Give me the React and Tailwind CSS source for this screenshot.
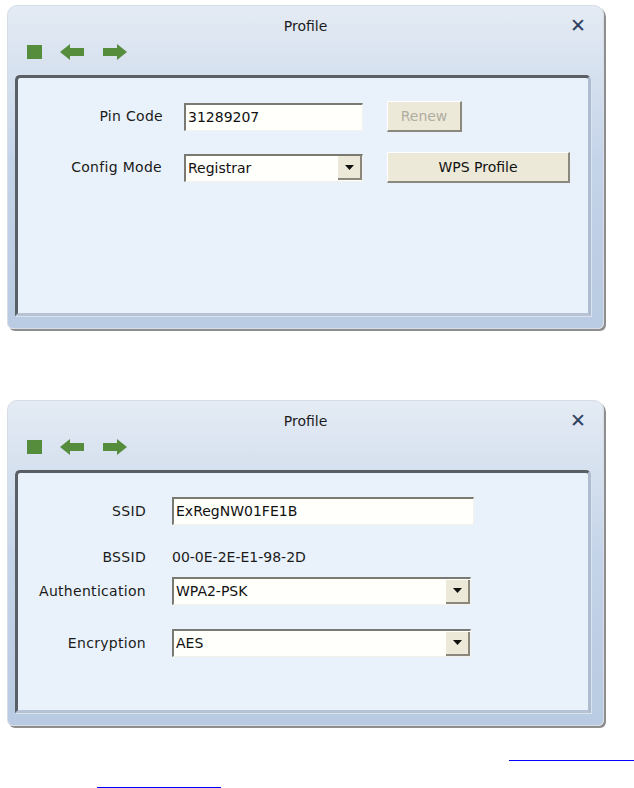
import React from "react";

const font = { fontFamily: '"DejaVu Sans", Tahoma, sans-serif' };

const GreenIcons = () => (
  <div className="flex items-center pl-[19px]">
    <div className="w-[15px] h-[14px] bg-[#558d3d]" />
    <svg width="25" height="16" viewBox="0 0 25 16" className="ml-[18px]">
      <path d="M0 8 L10 0 L10 4 L24 4 L24 12 L10 12 L10 16 Z" fill="#558d3d" />
    </svg>
    <svg width="25" height="16" viewBox="0 0 25 16" className="ml-[17px]">
      <path d="M25 8 L15 0 L15 4 L1 4 L1 12 L15 12 L15 16 Z" fill="#558d3d" />
    </svg>
  </div>
);

const Window = ({ height, children }) => (
  <div
    className="ml-[7px] w-[597px] rounded-t-[10px] rounded-b-[6px] bg-gradient-to-b from-[#e4ebf4] via-[#c3d3e8] to-[#b9cbe2] border border-[#d7dde6] shadow-[2px_2px_0_#8e8e8e] flex flex-col"
    style={{ height }}
  >
    <div className="relative h-[69px] shrink-0">
      <div className="absolute left-0 right-0 top-[10px] text-center text-[14px] text-[#1b1b1b]">
        Profile
      </div>
      <div className="absolute right-[17px] top-[10px] text-[19px] font-bold text-[#2f405f] leading-none">
        ✕
      </div>
      <div className="absolute left-0 top-[38px]">
        <GreenIcons />
      </div>
    </div>
    <div className="flex-1 ml-[7px] mr-[12px] mb-[12px] rounded-t-[5px] bg-[#e9f2fa] border-t-[3px] border-l-[3px] border-[#5a5f66] border-r-[3px] border-r-[#aebcd0] border-b-[3px] border-b-[#b6c3d5] shadow-[1px_1px_0_#d9e2ee]">
      {children}
    </div>
  </div>
);

const Input = ({ value, width }) => (
  <div
    className="h-[28px] bg-[#fffffb] border-t-2 border-l-2 border-[#7a7a72] border-r border-b border-r-[#f4f2ea] border-b-[#f4f2ea] flex items-center pl-[2px] text-[14px] text-[#111]"
    style={{ width }}
  >
    {value}
  </div>
);

const Select = ({ value, width }) => (
  <div
    className="h-[28px] bg-[#fffffb] border-t-2 border-l-2 border-[#7a7a72] border-r border-b border-r-[#f4f2ea] border-b-[#f4f2ea] flex items-center text-[14px] text-[#111]"
    style={{ width }}
  >
    <span className="flex-1 pl-[2px]">{value}</span>
    <div className="w-[24px] h-[24px] bg-[#ece9d8] border-r-2 border-b-2 border-[#8a887c] flex items-center justify-center">
      <svg width="9" height="5" viewBox="0 0 9 5">
        <path d="M0 0 L9 0 L4.5 5 Z" fill="#111" />
      </svg>
    </div>
  </div>
);

const Button = ({ label, width, disabled }) => (
  <div
    className={`h-[31px] bg-[#ece9d8] border-t border-l border-white border-r-2 border-b-2 border-r-[#8b897d] border-b-[#8b897d] flex items-center justify-center text-[14px] ${
      disabled ? "text-[#b0ada0]" : "text-[#111]"
    }`}
    style={{ width }}
  >
    {label}
  </div>
);

const Label = ({ children, width }) => (
  <div className="text-right text-[14px] tracking-[0.3px] text-[#1b1b1b] shrink-0" style={{ width }}>
    {children}
  </div>
);

export default function App() {
  return (
    <div className="w-[634px] h-[788px] bg-white overflow-hidden" style={font}>
      <div className="pt-[5px]">
        <Window height={324}>
          <div className="pt-[23px] flex flex-col gap-[20px]">
            <div className="flex items-center">
              <Label width={145}>Pin Code</Label>
              <div className="ml-[21px]">
                <Input value="31289207" width={179} />
              </div>
              <div className="ml-[24px]">
                <Button label="Renew" width={75} disabled />
              </div>
            </div>
            <div className="flex items-center">
              <Label width={144}>Config Mode</Label>
              <div className="ml-[22px]">
                <Select value="Registrar" width={179} />
              </div>
              <div className="ml-[24px]">
                <Button label="WPS Profile" width={183} />
              </div>
            </div>
          </div>
        </Window>
      </div>

      <div className="pt-[71px]">
        <Window height={326}>
          <div className="pt-[24px] flex flex-col">
            <div className="flex items-center">
              <Label width={128}>SSID</Label>
              <div className="ml-[26px]">
                <Input value="ExRegNW01FE1B" width={302} />
              </div>
            </div>
            <div className="flex items-center mt-[18px] h-[28px]">
              <Label width={128}>BSSID</Label>
              <div className="ml-[26px] text-[14px] text-[#1b1b1b]">00-0E-2E-E1-98-2D</div>
            </div>
            <div className="flex items-center mt-[6px]">
              <Label width={128}>Authentication</Label>
              <div className="ml-[26px]">
                <Select value="WPA2-PSK" width={299} />
              </div>
            </div>
            <div className="flex items-center mt-[24px]">
              <Label width={128}>Encryption</Label>
              <div className="ml-[26px]">
                <Select value="AES" width={299} />
              </div>
            </div>
          </div>
        </Window>
      </div>

      <div className="relative h-[63px]">
        <div className="absolute left-[509px] right-0 top-[34px] h-px bg-[#0000ff]" />
        <div className="absolute left-[97px] w-[124px] top-[61px] h-px bg-[#0000ff]" />
      </div>
    </div>
  );
}
